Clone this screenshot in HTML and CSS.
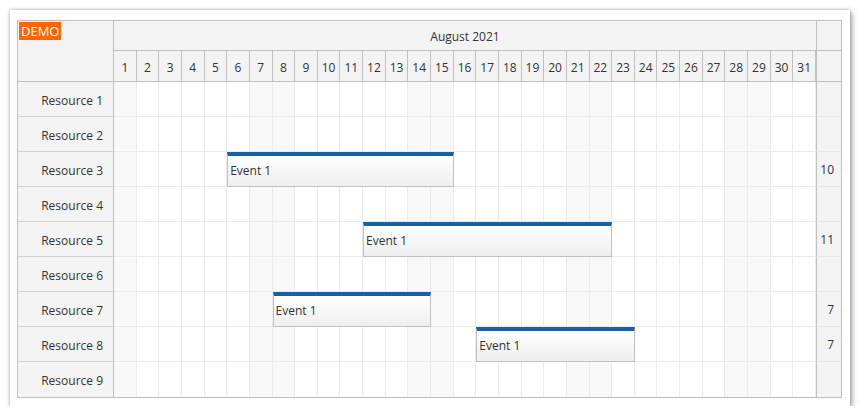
FILE: index.html
```html
<!DOCTYPE html>
<html>
<head>
<meta charset="utf-8">
<link rel="stylesheet" href="styles.css">
</head>
<body>
<div class="panel">
  <div class="sched">
    <div class="hdr">
      <div class="corner"><span class="demo">DEMO</span></div>
      <div class="hmid">
        <div class="month">August 2021</div>
        <div class="days">
          <div class="d">1</div><div class="d">2</div><div class="d">3</div><div class="d">4</div><div class="d">5</div><div class="d">6</div><div class="d">7</div><div class="d">8</div><div class="d">9</div><div class="d">10</div><div class="d">11</div><div class="d">12</div><div class="d">13</div><div class="d">14</div><div class="d">15</div><div class="d">16</div><div class="d">17</div><div class="d">18</div><div class="d">19</div><div class="d">20</div><div class="d">21</div><div class="d">22</div><div class="d">23</div><div class="d">24</div><div class="d">25</div><div class="d">26</div><div class="d">27</div><div class="d">28</div><div class="d">29</div><div class="d">30</div><div class="d">31</div>
        </div>
      </div>
      <div class="hright"><div class="hr1"></div><div class="hr2"></div></div>
    </div>

    <div class="row">
      <div class="rname">Resource 1</div>
      <div class="cells">
        <div class="c w"></div><div class="c"></div><div class="c"></div><div class="c"></div><div class="c"></div><div class="c"></div><div class="c w"></div><div class="c w"></div><div class="c"></div><div class="c"></div><div class="c"></div><div class="c"></div><div class="c"></div><div class="c w"></div><div class="c w"></div><div class="c"></div><div class="c"></div><div class="c"></div><div class="c"></div><div class="c"></div><div class="c w"></div><div class="c w"></div><div class="c"></div><div class="c"></div><div class="c"></div><div class="c"></div><div class="c"></div><div class="c w"></div><div class="c w"></div><div class="c"></div><div class="c"></div>
      </div>
      <div class="rsum"></div>
    </div>

    <div class="row">
      <div class="rname">Resource 2</div>
      <div class="cells">
        <div class="c w"></div><div class="c"></div><div class="c"></div><div class="c"></div><div class="c"></div><div class="c"></div><div class="c w"></div><div class="c w"></div><div class="c"></div><div class="c"></div><div class="c"></div><div class="c"></div><div class="c"></div><div class="c w"></div><div class="c w"></div><div class="c"></div><div class="c"></div><div class="c"></div><div class="c"></div><div class="c"></div><div class="c w"></div><div class="c w"></div><div class="c"></div><div class="c"></div><div class="c"></div><div class="c"></div><div class="c"></div><div class="c w"></div><div class="c w"></div><div class="c"></div><div class="c"></div>
      </div>
      <div class="rsum"></div>
    </div>

    <div class="row">
      <div class="rname">Resource 3</div>
      <div class="cells">
        <div class="c w"></div><div class="c"></div><div class="c"></div><div class="c"></div><div class="c"></div><div class="c"></div><div class="c w"></div><div class="c w"></div><div class="c"></div><div class="c"></div><div class="c"></div><div class="c"></div><div class="c"></div><div class="c w"></div><div class="c w"></div><div class="c"></div><div class="c"></div><div class="c"></div><div class="c"></div><div class="c"></div><div class="c w"></div><div class="c w"></div><div class="c"></div><div class="c"></div><div class="c"></div><div class="c"></div><div class="c"></div><div class="c w"></div><div class="c w"></div><div class="c"></div><div class="c"></div>
        <div class="event" style="left: 113.2px; width: 226.5px;">Event 1</div>
      </div>
      <div class="rsum">10</div>
    </div>

    <div class="row">
      <div class="rname">Resource 4</div>
      <div class="cells">
        <div class="c w"></div><div class="c"></div><div class="c"></div><div class="c"></div><div class="c"></div><div class="c"></div><div class="c w"></div><div class="c w"></div><div class="c"></div><div class="c"></div><div class="c"></div><div class="c"></div><div class="c"></div><div class="c w"></div><div class="c w"></div><div class="c"></div><div class="c"></div><div class="c"></div><div class="c"></div><div class="c"></div><div class="c w"></div><div class="c w"></div><div class="c"></div><div class="c"></div><div class="c"></div><div class="c"></div><div class="c"></div><div class="c w"></div><div class="c w"></div><div class="c"></div><div class="c"></div>
      </div>
      <div class="rsum"></div>
    </div>

    <div class="row">
      <div class="rname">Resource 5</div>
      <div class="cells">
        <div class="c w"></div><div class="c"></div><div class="c"></div><div class="c"></div><div class="c"></div><div class="c"></div><div class="c w"></div><div class="c w"></div><div class="c"></div><div class="c"></div><div class="c"></div><div class="c"></div><div class="c"></div><div class="c w"></div><div class="c w"></div><div class="c"></div><div class="c"></div><div class="c"></div><div class="c"></div><div class="c"></div><div class="c w"></div><div class="c w"></div><div class="c"></div><div class="c"></div><div class="c"></div><div class="c"></div><div class="c"></div><div class="c w"></div><div class="c w"></div><div class="c"></div><div class="c"></div>
        <div class="event" style="left: 249.1px; width: 249.1px;">Event 1</div>
      </div>
      <div class="rsum">11</div>
    </div>

    <div class="row">
      <div class="rname">Resource 6</div>
      <div class="cells">
        <div class="c w"></div><div class="c"></div><div class="c"></div><div class="c"></div><div class="c"></div><div class="c"></div><div class="c w"></div><div class="c w"></div><div class="c"></div><div class="c"></div><div class="c"></div><div class="c"></div><div class="c"></div><div class="c w"></div><div class="c w"></div><div class="c"></div><div class="c"></div><div class="c"></div><div class="c"></div><div class="c"></div><div class="c w"></div><div class="c w"></div><div class="c"></div><div class="c"></div><div class="c"></div><div class="c"></div><div class="c"></div><div class="c w"></div><div class="c w"></div><div class="c"></div><div class="c"></div>
      </div>
      <div class="rsum"></div>
    </div>

    <div class="row">
      <div class="rname">Resource 7</div>
      <div class="cells">
        <div class="c w"></div><div class="c"></div><div class="c"></div><div class="c"></div><div class="c"></div><div class="c"></div><div class="c w"></div><div class="c w"></div><div class="c"></div><div class="c"></div><div class="c"></div><div class="c"></div><div class="c"></div><div class="c w"></div><div class="c w"></div><div class="c"></div><div class="c"></div><div class="c"></div><div class="c"></div><div class="c"></div><div class="c w"></div><div class="c w"></div><div class="c"></div><div class="c"></div><div class="c"></div><div class="c"></div><div class="c"></div><div class="c w"></div><div class="c w"></div><div class="c"></div><div class="c"></div>
        <div class="event" style="left: 158.5px; width: 158.5px;">Event 1</div>
      </div>
      <div class="rsum">7</div>
    </div>

    <div class="row">
      <div class="rname">Resource 8</div>
      <div class="cells">
        <div class="c w"></div><div class="c"></div><div class="c"></div><div class="c"></div><div class="c"></div><div class="c"></div><div class="c w"></div><div class="c w"></div><div class="c"></div><div class="c"></div><div class="c"></div><div class="c"></div><div class="c"></div><div class="c w"></div><div class="c w"></div><div class="c"></div><div class="c"></div><div class="c"></div><div class="c"></div><div class="c"></div><div class="c w"></div><div class="c w"></div><div class="c"></div><div class="c"></div><div class="c"></div><div class="c"></div><div class="c"></div><div class="c w"></div><div class="c w"></div><div class="c"></div><div class="c"></div>
        <div class="event" style="left: 362.3px; width: 158.5px;">Event 1</div>
      </div>
      <div class="rsum">7</div>
    </div>

    <div class="row last">
      <div class="rname">Resource 9</div>
      <div class="cells">
        <div class="c w"></div><div class="c"></div><div class="c"></div><div class="c"></div><div class="c"></div><div class="c"></div><div class="c w"></div><div class="c w"></div><div class="c"></div><div class="c"></div><div class="c"></div><div class="c"></div><div class="c"></div><div class="c w"></div><div class="c w"></div><div class="c"></div><div class="c"></div><div class="c"></div><div class="c"></div><div class="c"></div><div class="c w"></div><div class="c w"></div><div class="c"></div><div class="c"></div><div class="c"></div><div class="c"></div><div class="c"></div><div class="c w"></div><div class="c w"></div><div class="c"></div><div class="c"></div>
      </div>
      <div class="rsum"></div>
    </div>
  </div>
</div>
</body>
</html>
```

FILE: styles.css
```css
* { box-sizing: border-box; }
html, body { margin: 0; padding: 0; background: #ffffff; }
body {
  font-family: "Open Sans", "Noto Sans", sans-serif;
  font-size: 12px;
  color: #333333;
}
.panel {
  margin: 10px 0 0 10px;
  width: 840px;
  height: 396px;
  padding: 10px 0 0 7px;
  background: #ffffff;
  box-shadow: 0 0 3px rgba(0,0,0,0.25), 2px 2px 6px rgba(0,0,0,0.35);
}
.sched {
  width: 825px;
  border: 1px solid #c0c0c0;
  background: #ffffff;
}
.hdr {
  display: flex;
  height: 61px;
  border-bottom: 1px solid #c0c0c0;
  background: #f3f3f3;
}
.corner {
  width: 96px;
  flex: none;
  border-right: 1px solid #c0c0c0;
  padding: 1px 0 0 1px;
}
.demo {
  display: inline-block;
  background: #ff6600;
  color: #ffffff;
  font-size: 13px;
  line-height: 18px;
  height: 18px;
  padding: 0 2px;
}
.hmid {
  width: 702px;
  flex: none;
  display: flex;
  flex-direction: column;
}
.month {
  height: 30px;
  border-bottom: 1px solid #c0c0c0;
  display: flex;
  align-items: center;
  justify-content: center;
  font-size: 12px;
  padding-top: 1px;
}
.days {
  flex: 1;
  display: grid;
  grid-template-columns: repeat(31, 1fr);
}
.d {
  border-right: 1px solid #c0c0c0;
  display: flex;
  align-items: center;
  justify-content: center;
  padding-top: 2px;
}
.hright {
  flex: 1;
  border-left: 1px solid #c0c0c0;
  display: flex;
  flex-direction: column;
}
.hr1 {
  height: 30px;
  border-bottom: 1px solid #c0c0c0;
}
.row {
  display: flex;
  height: 35px;
}
.rname {
  width: 96px;
  flex: none;
  background: #f3f3f3;
  border-right: 1px solid #c0c0c0;
  border-bottom: 1px solid #d0d0d0;
  display: flex;
  align-items: center;
  justify-content: flex-end;
  padding: 2px 10px 0 0;
}
.cells {
  position: relative;
  width: 702px;
  flex: none;
  display: grid;
  grid-template-columns: repeat(31, 1fr);
}
.c {
  border-right: 1px solid #ebebeb;
  border-bottom: 1px solid #ebebeb;
  background: #ffffff;
}
.c.w { background: #f8f8f8; }
.rsum {
  flex: 1;
  background: #f3f3f3;
  border-left: 1px solid #c0c0c0;
  border-bottom: 1px solid #e6e6e6;
  display: flex;
  align-items: center;
  justify-content: flex-end;
  padding: 1px 7px 0 0;
  color: #333333;
}
.row.last .rname,
.row.last .c,
.row.last .rsum { border-bottom: none; }
.event {
  position: absolute;
  top: 0;
  height: 35px;
  border: 1px solid #c0c0c0;
  border-top: 4px solid #1560a6;
  background: linear-gradient(to bottom, #ffffff 0%, #eeeeee 100%);
  padding: 0 0 2px 2px;
  display: flex;
  align-items: center;
  color: #333333;
}
```
